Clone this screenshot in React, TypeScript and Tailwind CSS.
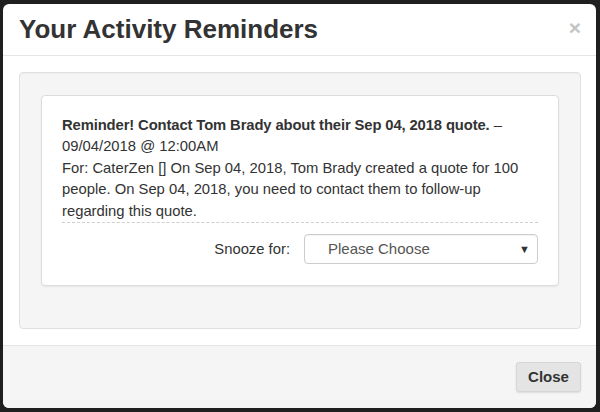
import { FC } from 'react';

const font = { fontFamily: '"Liberation Sans", Arial, sans-serif' };

const ReminderCard: FC = () => {
  return (
    <div className="rounded-[4px] border border-[#dcdcdc] bg-white px-[20px] pt-[19px] pb-[21px] shadow-[0_1px_2px_rgba(0,0,0,0.06)]">
      <div className="border-b border-dashed border-[#cfcfcf] text-[14.8px] leading-[21.4px] text-[#333]">
        <span className="font-bold tracking-[-0.12px]">
          Reminder! Contact Tom Brady about their Sep 04, 2018 quote.
        </span>{' '}
        – 09/04/2018 @ 12:00AM
        <br />
        For: CaterZen [] On Sep 04, 2018, Tom Brady created a quote for 100
        people. On Sep 04, 2018, you need to contact them to follow-up
        regarding this quote.
      </div>
      <div className="mt-[11px] flex items-center justify-end gap-[14px]">
        <span className="text-[14.8px] text-[#333]">Snooze for:</span>
        <div className="relative flex h-[30px] w-[234px] items-center rounded-[4px] border border-[#cccccc] bg-white pl-[23px] text-[15px] text-[#555] shadow-[inset_0_1px_1px_rgba(0,0,0,0.05)]">
          Please Choose
          <span className="absolute right-[7px] top-[6px] text-[11px] text-[#333]">▼</span>
        </div>
      </div>
    </div>
  );
};

export default function App() {
  return (
    <div
      className="h-[412px] w-[600px] bg-[#1f1f1f] pt-[4px] pb-[4px] pl-[3px] pr-[4px]"
      style={font}
    >
      <div className="flex h-full flex-col overflow-hidden rounded-[6px] bg-white">
        <div className="flex h-[52px] items-center justify-between border-b border-[#e5e5e5] pl-[16px] pr-[15px]">
          <h4 className="text-[26px] font-bold text-[#333]">Your Activity Reminders</h4>
          <span className="mb-[4px] text-[21px] font-bold leading-none text-[#c4c4c4]">×</span>
        </div>
        <div className="pl-[16px] pr-[15px] pt-[16px] pb-[16px]">
          <div className="rounded-[4px] border border-[#e0e0e0] bg-[#f5f5f5] px-[21px] pt-[22px] pb-[42px] shadow-[inset_0_1px_1px_rgba(0,0,0,0.03)]">
            <ReminderCard />
          </div>
        </div>
        <div className="flex flex-1 items-center justify-end border-t border-[#e5e5e5] bg-[#f5f5f5] pr-[15px]">
          <button className="h-[30px] w-[65px] rounded-[3px] border border-[#d6d6d6] bg-[#e4e4e4] text-[15px] font-bold text-[#333] shadow-[0_1px_2px_rgba(0,0,0,0.1)]">
            Close
          </button>
        </div>
      </div>
    </div>
  );
}
